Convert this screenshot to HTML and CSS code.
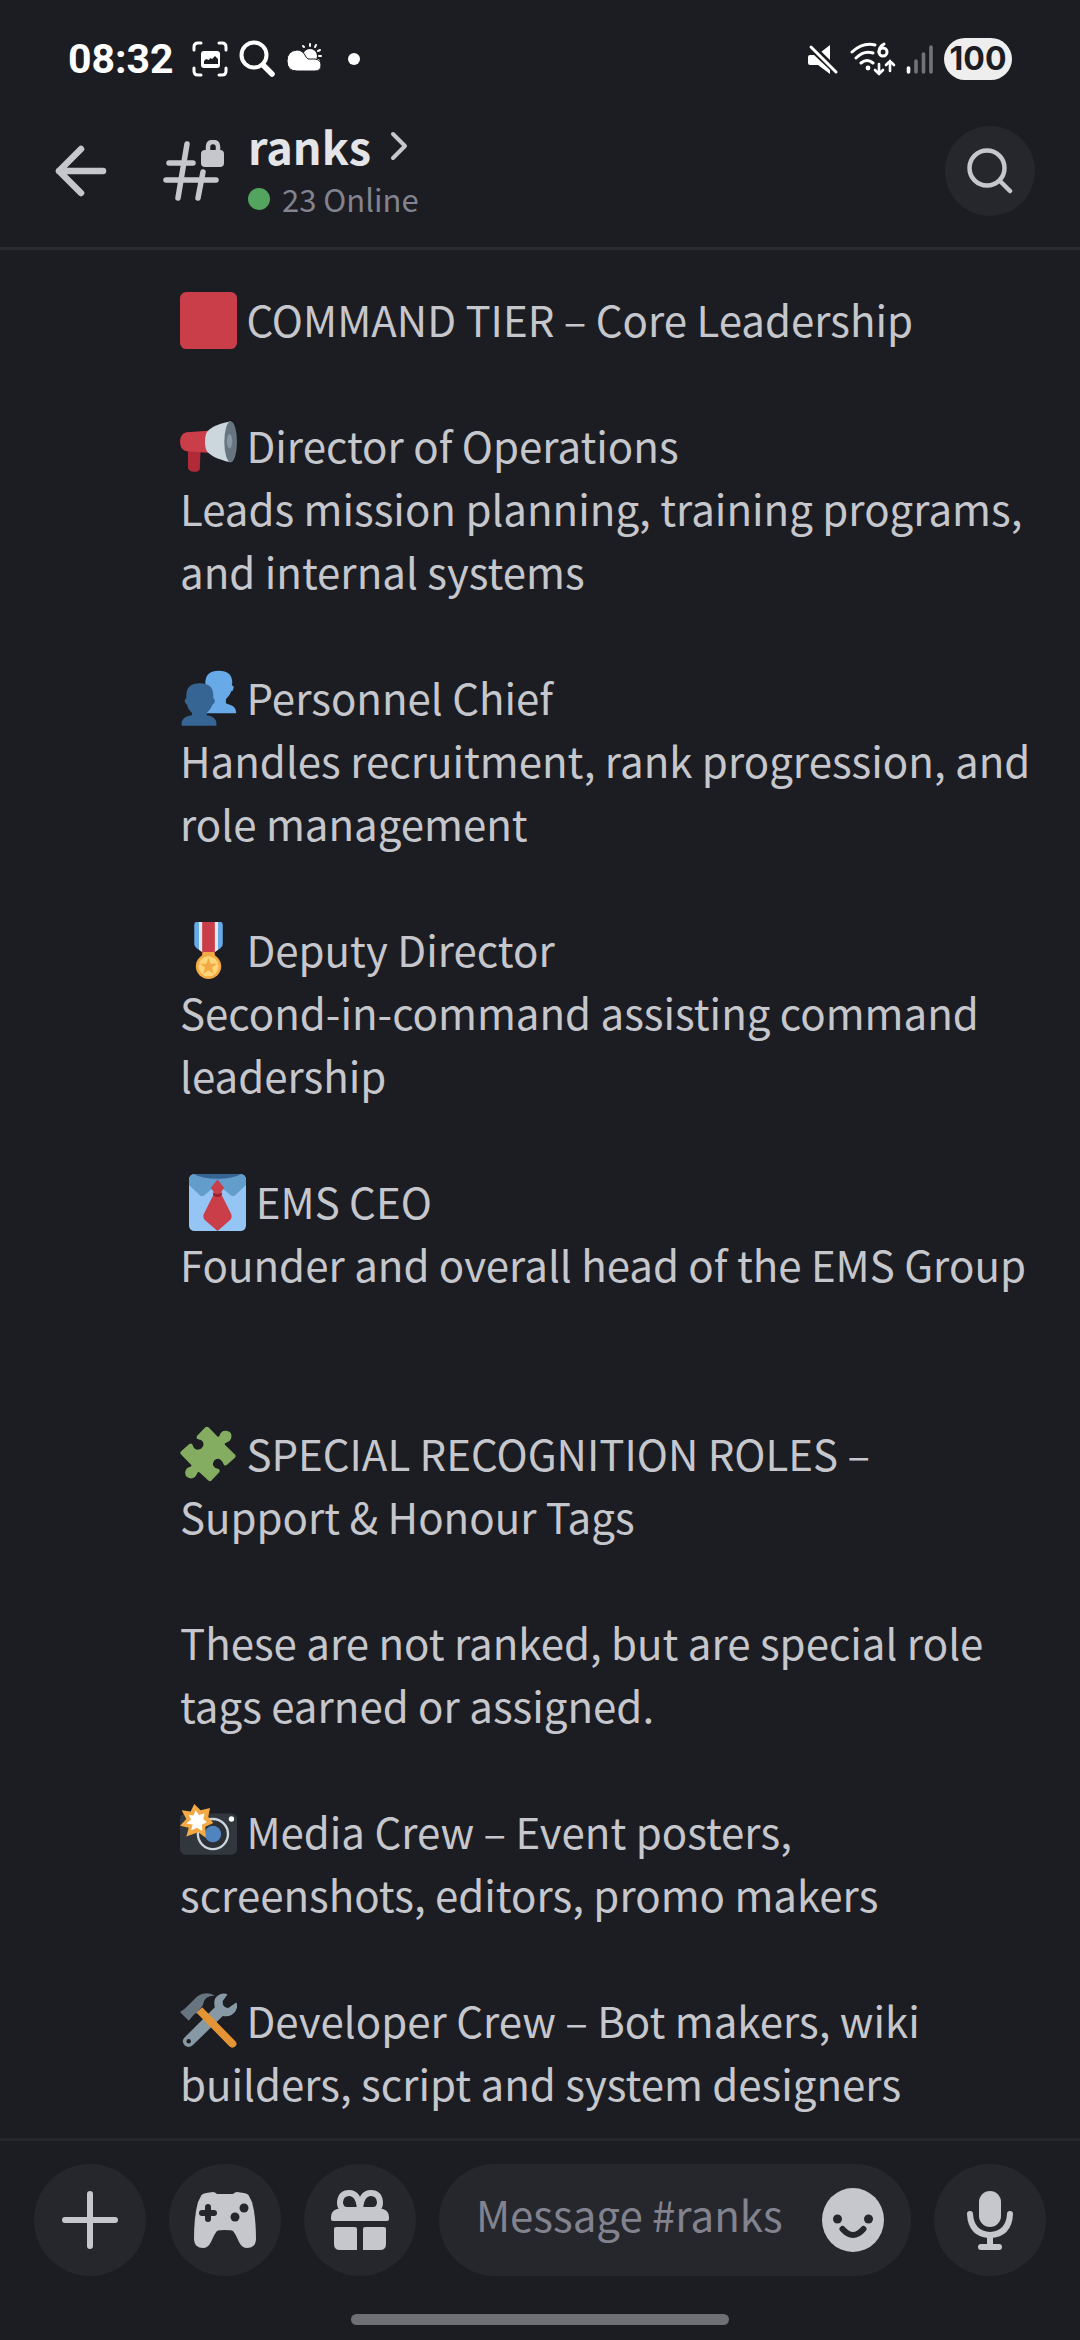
FILE: index.html
```html
<!DOCTYPE html>
<html lang="en">
<head>
<meta charset="utf-8">
<meta name="viewport" content="width=device-width, initial-scale=1">
<title>#ranks</title>
<link rel="stylesheet" href="styles.css">
</head>
<body>
<div class="app">
  <div class="status">
    <span class="clock">08:32</span>
    <svg class="icon" width="36" height="36" viewBox="0 0 36 36" fill="none" stroke="#fff" stroke-width="3" stroke-linecap="round"><path d="M2 9V6q0-4 4-4h3M27 2h3q4 0 4 4v3M34 27v3q0 4-4 4h-3M9 34H6q-4 0-4-4v-3"/><rect x="9" y="10" width="19" height="17" rx="3" fill="#fff" stroke="none"/><path d="M12 23v-3l2-2 3 1 1-2 2 1 3-3 3 3v5z" fill="#1c1d22" stroke="none"/></svg>
    <svg class="icon" width="38" height="38" viewBox="0 0 38 38" fill="none" stroke="#fff" stroke-linecap="round"><circle cx="16" cy="15" r="12.5" stroke-width="4"/><path d="M25 25l9 9" stroke-width="5.5"/></svg>
    <svg class="icon" width="36" height="36" viewBox="0 0 36 36" fill="#fff"><circle cx="24" cy="15" r="7"/><path d="M24 5V3M18 6l-1-1M29 6l1-2M32 10l2-1M33 15h2M32 19l1 1" stroke="#fff" stroke-width="2" stroke-linecap="round"/><path d="M11 9q6 0 9 7l2 2h7q6 1 6 6 0 6-6 6H11Q1 30 1 20 1 10 11 9z" stroke="#1c1d22"/></svg>
    <span class="more-dot"></span>
    <span class="spring"></span>
    <svg class="icon" width="32" height="34" viewBox="0 0 32 34" fill="#fff"><path d="M2 13h4l16 15v4L10 23H2q-2 0-2-2v-6q0-2 2-2zM22 3v15L13 10z"/><path d="M6 4l24 25" stroke="#1c1d22" stroke-width="3"/><path d="M3 5l25 25" stroke="#fff" stroke-width="3" stroke-linecap="round"/></svg>
    <svg class="icon" width="46" height="36" viewBox="0 0 46 36" fill="none" stroke="#fff" stroke-width="3" stroke-linecap="round"><path d="M2 11Q13 1 25 4M6 17Q14 9 23 12M11 22q6-5 12 0"/><circle cx="18" cy="27" r="2.4" fill="#fff" stroke="none"/><path d="M34 3q-5 3-5 8"/><circle cx="33" cy="11" r="4"/><path d="M29 23v10M25 29l4 4 4-4M40 30V20M36 24l4-4 4 4" stroke-width="2.6"/></svg>
    <svg class="icon" width="28" height="32" viewBox="0 0 28 32" stroke="#727377" stroke-width="3.6" stroke-linecap="round"><path d="M2.500 25v4" stroke="#fff"/><path d="M10 18v11M17.500 11v18M25 4v25"/></svg>
    <span class="battery">100</span>
  </div>

  <header class="topbar">
    <button class="plain" type="button" aria-label="Back"><svg class="icon" width="52" height="52" viewBox="0 0 52 52" fill="none" stroke="#c6c7cc" stroke-width="6.500" stroke-linecap="round" stroke-linejoin="round"><path d="M48 26H4M26 4L4 26l22 22"/></svg></button>
    <svg class="icon" width="62" height="62" viewBox="0 0 62 62" fill="none" stroke="#c6c7cc" stroke-width="5.500" stroke-linecap="round"><path d="M24 4l-9 54M6 23h24M3 40h50M40 32l-5 26"/><rect x="38" y="10" width="23" height="17" rx="4" fill="#c6c7cc" stroke="none"/><path d="M45 11V7q0-5 5-5t5 5v4" stroke-width="4.500"/></svg>
    <div class="channel">
      <h1 class="name">ranks <svg class="icon" width="18" height="32" viewBox="0 0 18 32" fill="none" stroke="#c6c7cc" stroke-width="4" stroke-linecap="round" stroke-linejoin="round"><path d="M3 4l12 12L3 28"/></svg></h1>
      <p class="online"><span class="dot"></span>23 Online</p>
    </div>
    <button class="round small" type="button" aria-label="Search"><svg class="icon" width="46" height="46" viewBox="0 0 46 46" fill="none" stroke="#c6c7cc" stroke-width="4.500" stroke-linecap="round"><circle cx="20" cy="20" r="17.500"/><path d="M33 33l10 10"/></svg></button>
  </header>

  <main class="message">
    <p><svg class="emoji" viewBox="0 0 36 36"><rect width="36" height="36" rx="4" fill="#c93e48"/></svg> COMMAND TIER – Core Leadership</p>
    <p><svg class="emoji" viewBox="0 0 36 36"><path d="M5 20h8l-.5 12q-.5 2-3.500 2-4 0-4-3z" fill="#b02a38"/><path d="M4 9l14-1v14L4 21q-4-1-4-6t4-6z" fill="#c93e48"/><path d="M32 2Q18 5 16.500 10q-1.500 5 0 10Q19 25 32 28z" fill="#ccd6dd"/><ellipse cx="32" cy="15" rx="4" ry="13" fill="#66757f"/><ellipse cx="31.300" cy="14.600" rx="1.700" ry="4.500" fill="#8899a6"/></svg> Director of Operations<br>Leads mission planning, training programs, and internal systems</p>
    <p><svg class="emoji" viewBox="0 0 36 36"><path d="M16 8q0-7.500 8.500-7.500T33 8l-.3 1.500 1.300 1-.6 2.500-.9.300q-1 3-3.500 5.200V21l4 1.500q2.500 1.500 2.500 4.800H16z" fill="#68a9e8"/><path d="M4 16q0-7.700 8.500-7.700T21 16v2q1 0 1 1.500t-1.500 2.500q-1 3-3.500 5v1.500q6 .7 6 5.500v1.200H1V34q0-4.800 6.500-5.500V27q-2.500-2-3-5Q3 21 3 19.500T4 18z" fill="#366594"/></svg> Personnel Chief<br>Handles recruitment, rank progression, and role management</p>
    <p><svg class="emoji" viewBox="0 0 36 36"><path d="M9 1.500Q9 0 10.500 0h15Q27 0 27 1.500V14q0 1.500-1.500 2.500L22 19h-8l-3.500-2.500Q9 15.500 9 14z" fill="#68a9e8"/><path d="M12 0h12v17.500L22 19h-8l-2-1.500z" fill="#e1e8ed"/><path d="M14 0h8v20h-8z" fill="#c93e48"/><rect x="14" y="19" width="8" height="3" rx="1" fill="#f3aa45"/><circle cx="18" cy="28" r="8" fill="#f3aa45"/><circle cx="18" cy="28" r="6.300" fill="#ffd67a"/><path d="M18 22.500l1.400 3.800h4l-3.200 2.500 1.200 4-3.400-2.400-3.400 2.400 1.200-4-3.200-2.500h4z" fill="#f3aa45"/></svg> Deputy Director<br>Second-in-command assisting command leadership</p>
    <p>&nbsp;<svg class="emoji" viewBox="0 0 36 36"><rect width="36" height="36" rx="3.500" fill="#94c5f5"/><path d="M3 0h30q3 1 3 4v3l-7 6.500q-1 .8-2.500 0L20 8h-4l-6.500 5.500q-1.500.8-2.500 0L0 7V4q0-3 3-4z" fill="#629dcc"/><path d="M3 0h30q-5 3-15 3T3 0z" fill="#366594"/><path d="M18 3.500l4.200 5.200L20 12l6 12q2 3 0 5l-8 7-8-7q-2-2 0-5l6-12-2.200-3.300z" fill="#c93e48"/><path d="M15 11.500q3 2.500 6 0 0 3-3 3t-3-3z" fill="#9b1f2c"/></svg> EMS CEO<br>Founder and overall head of the EMS Group<br><br></p>
    <p><svg class="emoji" viewBox="0 0 36 36"><path d="M16 .8q1-.8 2 0l5.500 5.700q1 .8 1.500-.5 1-3.500 4.500-3 4 1 2.700 5-.7 2-3 2.500-1.500.5-.7 1.500l6.200 6q1 1 0 2l-5 4.500q-1.500 1.200-2.300-.7-.5-2-2.500-3-3-.5-4 2.500-.6 2.200 1.500 3.300l2 .5q1 .5.500 2l-5 5.300q-1 1-2 0l-5.500-5q-1-.8-1.500.5-1 3-4 3.200-4-.4-3.600-4.200.6-2.500 3-3 1.500-.6.700-1.500L.7 18q-1-1 0-2l5-4.500q1.500-1.200 2.300.5.600 2.500 3 3 3-.2 3.800-3 .2-2.500-2-3.300l-1.500-.4Q9.800 7.500 11 6z" fill="#84ad62"/></svg> SPECIAL RECOGNITION ROLES – Support &amp; Honour Tags</p>
    <p>These are not ranked, but are special role tags earned or assigned.</p>
    <p><svg class="emoji" viewBox="0 0 36 36"><rect y="6" width="36" height="26" rx="3.500" fill="#31373d"/><circle cx="32.500" cy="9.500" r="1.700" fill="#fff"/><circle cx="20.800" cy="19" r="9.500" fill="#2b3036" stroke="#ccd6dd" stroke-width="1.500"/><circle cx="20.800" cy="19" r="5.200" fill="#5084bf"/><path d="M9 0l4 4 6-1.500-1.200 5.500 3.200 4-5 2.300.2 7-4.700-3.500L4 20.500 5.500 15 0 13.800 4 9.500 1 4l5.700.7z" fill="#f3aa45"/><path d="M9.800 4l2.200 3 3.500-1-.8 3.500L17 11.500l-3 1.500v4l-3.200-2L7 16.500 8 13l-4-.7 3-2.500L5.500 7l3 .3z" fill="#fff"/></svg> Media Crew – Event posters, screenshots, editors, promo makers</p>
    <p><svg class="emoji" viewBox="0 0 36 36"><path d="M3 28L22 9Q20.500 3 25 1q3-1.500 5 0l-3 4q-.5 4 3.500 4.500L35.500 6q1.500 2-.5 5.500-2.500 4-8 3L8 33q-2.500 2-5 .2-2.500-2.700 0-5.200z" fill="#8899a6"/><circle cx="5.500" cy="30.500" r="1.400" fill="#1c1d22"/><path d="M0 12l3-2 8-8q5-3.500 11-.5-7 .3-7.500 6l-4 5.500H9.500L8 14.500 5.500 17.500z" fill="#66757f"/><path d="M14 9l21 21.500q1.500 1.500 0 3.200-2 1.600-3.800 0L10.500 12.500z" fill="#e59435"/></svg> Developer Crew – Bot makers, wiki builders, script and system designers</p>
  </main>

  <footer class="composer">
    <button class="round" type="button" aria-label="Add"><svg class="icon" width="58" height="60" viewBox="0 0 58 60" fill="none" stroke="#c6c7cc" stroke-width="6" stroke-linecap="round"><path d="M29 4v52M4 30h50"/></svg></button>
    <button class="round" type="button" aria-label="Activities"><svg class="icon" width="64" height="58" viewBox="0 0 64 58"><path d="M8 5q0-3 12-4 2 0 4 2h16q2-2 4-2 12 1 12 4l3 6q4 14 4 38-1 8-9 8-5 0-8-6-4-9-6-11-2-1-8-1t-8 1q-2 2-6 11-3 6-8 6-8 0-9-8 0-24 4-38z" fill="#c6c7cc"/><path d="M15 16v12M9 22h12" stroke="#26272c" stroke-width="6" stroke-linecap="round"/><circle cx="51" cy="17" r="4.500" fill="#26272c"/><circle cx="42" cy="26" r="4.500" fill="#26272c"/></svg></button>
    <button class="round" type="button" aria-label="Send a gift"><svg class="icon" width="58" height="60" viewBox="0 0 58 60" fill="#c6c7cc"><path d="M29 20H16q-7 0-7-8 1-9 9-9 10 0 11 17zM29 20h13q7 0 7-8-1-9-9-9-10 0-11 17z" fill="none" stroke="#c6c7cc" stroke-width="6"/><path d="M6 19h46q6 2 6 8v2q0 2-2 2H2q-2 0-2-2v-2q0-6 6-8zM5 37h19q2 0 2 2v21H9q-6 0-6-6V39q0-2 2-2zM34 37h19q2 0 2 2v15q0 6-6 6H32V39q0-2 2-2z"/></svg></button>
    <div class="field">
      <input class="text" type="text" aria-label="Message #ranks" placeholder="Message #ranks">
      <button class="plain" type="button" aria-label="Emoji"><svg class="icon" width="62" height="64" viewBox="0 0 62 64"><ellipse cx="31" cy="32" rx="31" ry="32" fill="#c6c7cc"/><circle cx="15.500" cy="31" r="4.500" fill="#26272c"/><circle cx="46.500" cy="31" r="4.500" fill="#26272c"/><path d="M20.500 41q10.500 12 21 0" fill="none" stroke="#26272c" stroke-width="6" stroke-linecap="round"/></svg></button>
    </div>
    <button class="round" type="button" aria-label="Record voice message"><svg class="icon" width="46" height="60" viewBox="0 0 46 60" fill="none" stroke="#c6c7cc" stroke-width="6" stroke-linecap="round"><rect x="12" y="1" width="22" height="36" rx="11" fill="#c6c7cc" stroke="none"/><path d="M3 24q1 20 20 21 19-1 20-21M23 45v11M14 57h18"/></svg></button>
  </footer>
  <div class="home"></div>
</div>
</body>
</html>
```
FILE: styles.css
```css
* { box-sizing: border-box; margin: 0; padding: 0; }

body {
  background: #1c1d22;
  color: #c6c7cc;
  font-family: "Noto Sans CJK SC", "Noto Sans", sans-serif;
  font-size: 42px;
}

.app { display: flex; flex-direction: column; min-height: 100vh; }

.icon { display: block; flex: none; }

button { border: 0; font: inherit; color: inherit; background: none; }

/* status bar */
.status {
  display: flex;
  align-items: center;
  gap: 10px;
  height: 118px;
  padding: 0 68px;
  color: #fff;
}
.clock { margin-right: 8px; font: bold 41px/48px Roboto, sans-serif; }
.more-dot { width: 12px; height: 12px; margin-left: 16px; border-radius: 50%; background: #fff; }
.spring { flex: 1; }
.battery {
  width: 68px;
  border-radius: 21px;
  background: #eee;
  color: #1c1d22;
  font: bold 32px/42px Inter, sans-serif;
  text-align: center;
}

/* channel header */
.topbar {
  display: flex;
  align-items: center;
  padding: 0 45px 23px 55px;
  border-bottom: 3px solid #2a2b30;
}
.topbar > .icon { margin-left: 56px; }
.channel { flex: 1; height: 106px; padding-left: 23px; }
.name { display: flex; align-items: center; gap: 19px; color: #e4e5e9; font-size: 45px; line-height: 56px; }
.online { display: flex; align-items: center; gap: 12px; color: #82838f; font-size: 31px; line-height: 50px; }
.dot { width: 22px; height: 22px; border-radius: 50%; background: #52a45f; }

.plain { flex: none; }
.round {
  display: flex;
  flex: none;
  align-items: center;
  justify-content: center;
  width: 112px;
  height: 112px;
  border-radius: 50%;
  background: #26272c;
}
.small { width: 90px; height: 90px; }

/* message text */
.message {
  display: flex;
  flex: 1;
  flex-direction: column;
  gap: 63px;
  padding: 37px 46px 21px 180px;
  line-height: 63px;
}
.emoji { width: 57px; height: 57px; vertical-align: -12px; }

/* composer */
.composer {
  display: flex;
  gap: 23px;
  padding: 23px 34px 38px;
  border-top: 3px solid #25262b;
}
.field {
  display: flex;
  flex: 1;
  align-items: center;
  min-width: 0;
  padding: 0 27px 0 37px;
  border-radius: 56px;
  background: #26272c;
}
.text {
  flex: 1;
  min-width: 0;
  height: 80px;
  padding-bottom: 14px;
  border: 0;
  outline: 0;
  background: none;
  color: #c6c7cc;
  font: inherit;
}
.text::placeholder { color: #82838f; opacity: 1; }

.home {
  width: 35%;
  height: 11px;
  margin: 0 auto 15px;
  border-radius: 6px;
  background: #6f7074;
}
```
